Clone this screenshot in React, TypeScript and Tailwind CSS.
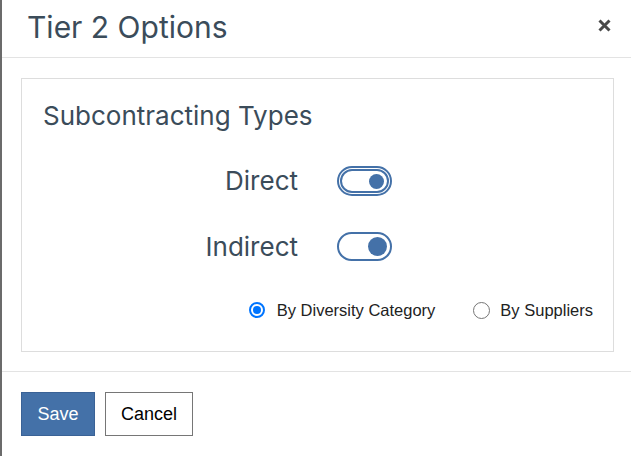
import React from "react";

const heading = { fontFamily: "Inter, Roboto, sans-serif" };

function Toggle({ focused }: { focused?: boolean }) {
  if (focused) {
    return (
      <div className="w-[55px] h-[30px] rounded-full border-2 border-[#4471a8] p-[1px]">
        <div className="w-full h-full rounded-full border-2 border-[#4471a8] flex items-center justify-end pr-[3px]">
          <div className="w-[15px] h-[15px] rounded-full bg-[#4471a8]" />
        </div>
      </div>
    );
  }
  return (
    <div className="w-[55px] h-[29px] rounded-full border-2 border-[#4471a8] flex items-center justify-end pr-[3px]">
      <div className="w-[19px] h-[19px] rounded-full bg-[#4471a8]" />
    </div>
  );
}

function Radio({ checked }: { checked?: boolean }) {
  if (checked) {
    return (
      <span className="w-[16px] h-[16px] rounded-full border-2 border-[#0075ff] flex items-center justify-center shrink-0">
        <span className="w-[8px] h-[8px] rounded-full bg-[#0075ff]" />
      </span>
    );
  }
  return <span className="w-[17px] h-[17px] rounded-full border border-[#767676] bg-white shrink-0" />;
}

export default function App() {
  return (
    <div className="w-[631px] h-[456px] bg-white border-l-2 border-[#6b6b6b] flex flex-col overflow-hidden">
      <div className="h-[58px] border-b border-[#e3e3e3] flex items-center justify-between pl-[25px] pr-[19px] shrink-0">
        <h1 className="text-[30px] text-[#3b4c5a] leading-none pb-[4px]" style={heading}>
          Tier 2 Options
        </h1>
        <svg width="15" height="15" viewBox="0 0 15 15" className="mb-[7px]">
          <path d="M2.5 2.5 L12.5 12.5 M12.5 2.5 L2.5 12.5" stroke="#4a4a4a" strokeWidth="3" strokeLinecap="butt" />
        </svg>
      </div>

      <div className="pl-[19px] pr-[17px] pt-[20px] pb-[19px] border-b border-[#e3e3e3] shrink-0">
        <div className="h-[274px] border border-[#dddddd] pl-[21px] pr-[20px] pt-[24px]">
          <h2 className="text-[26px] text-[#3b4c5a] leading-none" style={heading}>
            Subcontracting Types
          </h2>
          <div className="grid grid-cols-[255px_auto] gap-x-[39px] gap-y-[36px] items-center mt-[37px]">
            <div className="text-right text-[26px] text-[#3b4c5a] leading-none" style={heading}>Direct</div>
            <Toggle focused />
            <div className="text-right text-[26px] text-[#3b4c5a] leading-none" style={heading}>Indirect</div>
            <Toggle />
          </div>
          <div
            className="flex justify-end items-center gap-[38px] mt-[37px] text-[16.5px] text-[#222]"
            style={{ fontFamily: "'Liberation Sans', Arial, sans-serif" }}
          >
            <label className="flex items-center gap-[12px]">
              <Radio checked />
              By Diversity Category
            </label>
            <label className="flex items-center gap-[10px]">
              <Radio />
              By Suppliers
            </label>
          </div>
        </div>
      </div>

      <div className="flex gap-[10px] pl-[19px] pt-[20px]" style={{ fontFamily: "'Liberation Sans', Arial, sans-serif" }}>
        <button className="w-[74px] h-[44px] bg-[#4471a8] border border-[#3a6296] text-white text-[18px]">Save</button>
        <button className="w-[88px] h-[44px] bg-white border border-[#767676] text-black text-[18px]">Cancel</button>
      </div>
    </div>
  );
}
